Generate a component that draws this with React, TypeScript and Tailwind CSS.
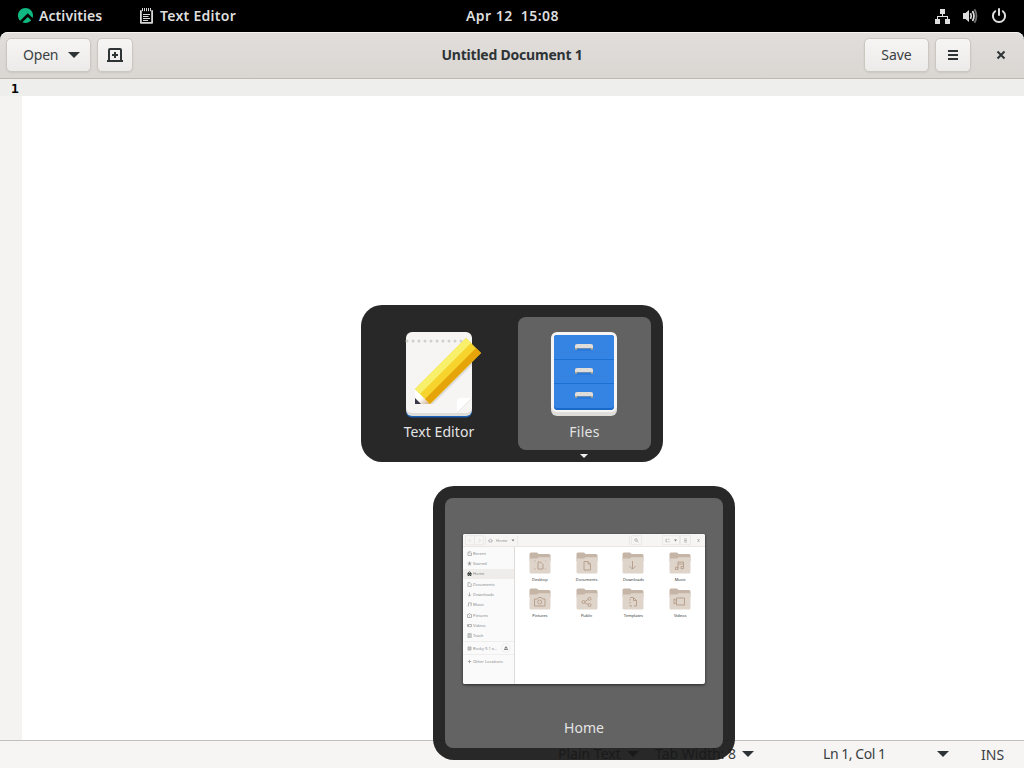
import React from 'react';

type BoxProps = { className?: string; children?: React.ReactNode };

const Caret = ({ className = '' }: BoxProps) => (
  <svg className={`shrink-0 ${className}`} width="12" height="6" viewBox="0 0 12 6">
    <path d="M0 0h12L6 6z" fill="#2e3436" />
  </svg>
);

const RockyLogo = () => (
  <svg className="absolute left-[18px] top-2" width="15" height="15" viewBox="0 0 24 24" fill="#10b981">
    <path d="M23.332 15.957c.433-1.239.668-2.570.668-3.957 0-6.627-5.373-12-12-12S0 5.373 0 12c0 3.280 1.315 6.251 3.447 8.417L15.620 8.245z" />
    <path d="M21.140 19.776l-5.520-5.520L6.975 22.900c1.528.706 3.230 1.100 5.025 1.100 3.661 0 6.940-1.640 9.140-4.224z" />
  </svg>
);

const NoteIcon = () => (
  <svg className="absolute left-[139px] top-2" width="15" height="16" viewBox="0 0 15 16">
    <path d="M1.900 2.300v12.500h11.200V2.300" fill="none" stroke="#d8d8d8" strokeWidth="1.800" strokeLinejoin="round" />
    <path d="M3.500 0v3.200M5.500 0v3.200M7.500 0v3.200M9.500 0v3.200M11.500 0v3.200" stroke="#d8d8d8" strokeWidth="1" />
    <path d="M4 6.500h7M4 8.500h5.500M4 10.500h7M4 12.500h5" stroke="#d8d8d8" strokeWidth="1" />
  </svg>
);

const TrayIcons = () => (
  <div className="absolute right-[17px] top-2 flex items-center gap-3 text-[#dedede]">
    <svg width="16" height="16" viewBox="0 0 16 16" fill="currentColor">
      <path d="M5 1h5v5H8v2h5v3h2v5h-5v-5h2V9H3v2h2v5H0v-5h2V8h5V6H5z" />
    </svg>
    <svg width="16" height="16" viewBox="0 0 16 16">
      <path d="M0 5h2.500L6 2v12l-3.500-3H0z" fill="currentColor" />
      <path d="M7.500 5.200q1.500 2.800 0 5.600" fill="none" stroke="currentColor" strokeWidth="1.700" />
      <path d="M9.500 3q3 5 0 10" fill="none" stroke="currentColor" strokeWidth="1.700" />
      <path d="M11.500 1.300q4 6.700 0 13.400" fill="none" stroke="#707070" strokeWidth="1.700" />
    </svg>
    <svg width="16" height="16" viewBox="0 0 16 16" fill="none" stroke="currentColor" strokeLinecap="round">
      <path d="M4.200 3.200a6.100 6.100 0 1 0 7.600 0" strokeWidth="2" />
      <path d="M8 1v6" strokeWidth="2" />
    </svg>
  </div>
);

const HeaderButton = ({ className = '', children }: BoxProps) => (
  <button
    className={`flex h-[34px] shrink-0 items-center rounded-[5px] border border-[#cdc7c2] bg-linear-to-b from-[#f6f5f4] to-[#edebe9] text-[#3a4042] shadow-[0_1px_2px_rgba(0,0,0,0.08)] ${className}`}
  >
    {children}
  </button>
);

const TextEditorIcon = () => (
  <svg width="96" height="96" viewBox="0 0 96 96" className="-ml-0.5 shrink-0">
    <defs>
      <linearGradient id="wood" gradientUnits="userSpaceOnUse" x1="25" y1="66" x2="38" y2="78">
        <stop offset="0.45" stopColor="#fff" />
        <stop offset="1" stopColor="#cdab8f" />
      </linearGradient>
    </defs>
    <rect x="15" y="10" width="66" height="81.500" rx="6" fill="#1a5fb4" />
    <rect x="15" y="8" width="66" height="82" rx="6" fill="#deddda" />
    <rect x="15" y="6" width="66" height="81" rx="6" fill="#f6f5f4" />
    <path d="M16 15h64" stroke="#d1cfcc" strokeWidth="3" strokeLinecap="round" strokeDasharray="0 6" />
    <path d="M66 87V76q0-4 4-4h11z" fill="#fff" />
    <path d="M66 87L81 72" stroke="#deddda" strokeWidth="0.700" />
    <path d="M38 78h4L81 39v-5z" fill="#000" opacity="0.100" />
    <path d="M24 63v15h15z" fill="url(#wood)" />
    <path d="M24 63L75 12l15 15L39 78z" fill="#f6d32d" />
    <path d="M24 63L75 12l5 5L29 68z" fill="#f8f06a" />
    <path d="M34 73L85 22l5 5L39 78z" fill="#e5a50a" />
    <path d="M24 72v6h6z" fill="#3d3846" />
  </svg>
);

const FilesIcon = () => (
  <svg width="96" height="96" viewBox="0 0 96 96" className="-ml-0.5 shrink-0">
    <rect x="15" y="10" width="66" height="80" rx="6" fill="#deddda" />
    <rect x="15" y="6" width="66" height="80" rx="6" fill="#f6f5f4" />
    <rect x="18" y="9" width="60" height="75" rx="3" fill="#1a68c8" />
    <rect x="18" y="9" width="60" height="73" rx="3" fill="#3584e4" />
    <path d="M18 33.500h60M18 57.500h60" stroke="#1c6fd3" strokeWidth="1.200" />
    {[18, 42, 66].map((y) => (
      <g key={y}>
        <path d={`M39 ${y + 4}h18v3H39z`} fill="#2a75d0" opacity="0.700" />
        <path d={`M39 ${y + 6}v-3q0-3 3-3h12q3 0 3 3v3h-2v-1.500H41V${y + 6}z`} fill="#a7a49e" />
        <path d={`M39 ${y + 4}V${y + 2}q0-2 2-2h14q2 0 2 2v2z`} fill="#deddda" />
      </g>
    ))}
  </svg>
);

const emblems: Record<string, string> = {
  Desktop: 'M9 10h2.500L14 12.500V17H9zM5.500 9h1M5.500 17h1M16 9h.7M16 17h.7',
  Documents: 'M8 9.500h4l2.500 2.500v6H8zM12 9.500V12h2.500',
  Downloads: 'M10.500 9v8M7.500 14.200l3 3 3-3',
  Music: 'M9 16.500V10h5.500v5.500M9 12h5.500M6.500 15.200H9v2.300H6.500zM12 14.500h2.500v2.300H12z',
  Pictures: 'M5.500 11h3l1-1.500h3l1 1.500h2.500v7H5.500zM8.700 14a2 2 0 1 0 4 0 2 2 0 1 0-4 0',
  Public: 'M6 14a1.500 1.500 0 1 0 3 0 1.500 1.500 0 1 0-3 0M12 10.800a1.500 1.500 0 1 0 3 0 1.500 1.500 0 1 0-3 0M12 17a1.500 1.500 0 1 0 3 0 1.500 1.500 0 1 0-3 0M9 13.500l3-2M9 14.700l3 1.700',
  Templates: 'M11.500 9.500l3 3V18H12M8 9.500h3M8 11v1.500M8 14v1.500M8 17v1h2M11.500 9.500v3h3',
  Videos: 'M7.500 10h8v7h-8zM7.500 12.500L5 11v5l2.500-1.500',
};

const Folder = ({ name }: { name: string }) => (
  <div className="flex h-9 flex-col items-center">
    <svg width="22" height="22" viewBox="0 0 22 22" className="shrink-0">
      <path d="M.5 2q0-1.500 1.500-1.500h5.500q1 0 1.500 1l.5.500h10.500q1.500 0 1.500 1.500V9H.5z" fill="#c5b5a7" />
      <path d="M.5 7.500q0-1 1-1h6.500L9.500 5.300h11q1 0 1 1V20q0 1.500-1.500 1.500H2Q.5 21.500.5 20z" fill="#dfd4ca" />
      <path d={emblems[name]} fill="none" stroke="#b39c88" strokeWidth="0.900" />
    </svg>
    <span className="mt-[2.500px] text-[4px] leading-[6px] text-[#2e3436]">{name}</span>
  </div>
);

const placePaths: Record<string, string> = {
  Recent: 'M1 1h3M1 1v3.500h3.500V2M2.500 2.500h1M4 .7l.7.700',
  Starred: 'M.5 2h4M1.200 3h2.800M1.300 4.500L2.500 3l1.200 1.500M2.500.5v3',
  Home: 'M.5 2.500L2.500.800l2 1.700M1 2.500v2h1v-1h1v1h1v-2z',
  Documents: 'M1 .7h2l1.200 1.200v2.800H1z',
  Downloads: 'M2.500.5v3.500M1 2.700l1.500 1.500L4 2.700',
  Music: 'M1.500 4V.9h2.800V3.500M.7 4h.8M3.500 3.700h.8',
  Pictures: 'M.5 1.500h1l.5-.8h1l.5.800h1v3h-4zM2 3h1',
  Videos: 'M1.500 1.500h3v2.200h-3zM1.500 2.500L.4 1.500v2z',
  Trash: 'M1 .7h3.200v4H1zM1.500 1.800h2M2 2.500v1.500M3 2.500v1.500',
  'Rocky 9.1 x…': 'M1 1h3v3H1zM1.500 2h2M1.500 3h2',
  'Other Locations': 'M2.500.8v3.500M.8 2.500h3.500',
};

const Place = ({ name, className = 'h-[10.35px]' }: { name: string; className?: string }) => (
  <div className={`flex items-center pl-1 text-[4px] leading-[5px] text-[#85898a] ${name === 'Home' ? 'bg-[#eeedec]' : ''} ${className}`}>
    <svg width="5" height="5" viewBox="0 0 5 5" className="mr-px shrink-0">
      <path d={placePaths[name]} fill="none" stroke={name === 'Home' ? '#303536' : '#858889'} strokeWidth={name === 'Home' ? '0.900' : '0.600'} />
    </svg>
    <span className="whitespace-nowrap">{name}</span>
    {name.startsWith('Rocky') && (
      <span className="ml-auto mr-1 flex h-2 w-2 items-center justify-center rounded-full shadow-[0_0_0_0.5px_#e5e3e1]">
        <svg width="4" height="4" viewBox="0 0 4 4"><path d="M0 2.500L2 0l2 2.500zM0 3h4v1H0z" fill="#858889" /></svg>
      </span>
    )}
  </div>
);

const FilesPreview = () => (
  <div className="flex h-[150px] w-[242px] flex-col overflow-hidden rounded-[2px] bg-white shadow-[0_1px_3px_rgba(0,0,0,0.6)]">
    <div className="flex h-[13px] shrink-0 items-center border-b border-[#e9e7e5] bg-[#f6f5f4]">
      <svg width="242" height="12" viewBox="0 0 242 12" fill="none" stroke="#96999a" strokeWidth=".6">
        <path d="M2.500 1.700h18v9h-18zM11.500 2v9M22.500 2v9M54.500 2v9M166.500 2v9M168.500 1.700h10v9h-10zM199.500 1.700h17v9h-17zM217.500 1.700h10v9h-10z" stroke="#e4e1de" />
        <path d="M7.500 5L6 6.500 7.500 8M16 5l1.500 1.500L16 8" opacity=".5" />
        <path d="M25.500 6.500l2-1.500 2 1.500M26 6v2h3V6" />
        <path d="M48.500 5.500h3l-1.500 2zM211 5.500h3l-1.500 2z" fill="#7b7e7f" stroke="none" />
        <circle cx="173" cy="6" r="1.300" />
        <path d="M174 7l1.500 1.500M203 5.300h1.300M205.300 5.300h1.300M203 7.800h1.300M205.300 7.800h1.300M203 5v3M221 5h3M221 6.500h3M221 8h3M234.500 5l2 3M236.500 5l-2 3" />
        <text x="33" y="8" fill="#92908e" stroke="none" fontSize="4">Home</text>
      </svg>
    </div>
    <div className="flex min-h-0 flex-1">
      <aside className="flex w-[52px] shrink-0 flex-col border-r border-[#dedbd8] bg-[#fafafa] pt-px">
        {['Recent', 'Starred', 'Home', 'Documents', 'Downloads', 'Music', 'Pictures', 'Videos', 'Trash'].map((name) => (
          <Place key={name} name={name} />
        ))}
        <Place name="Rocky 9.1 x…" className="h-[13px] border-t border-[#eeeeec]" />
        <Place name="Other Locations" className="h-[13px] border-t border-[#eeeeec]" />
      </aside>
      <main className="grid flex-1 grid-cols-4 content-start pl-[1.5px] pr-[1.5px] pt-[5px]">
        {Object.keys(emblems).map((name) => <Folder key={name} name={name} />)}
      </main>
    </div>
  </div>
);

export default function App() {
  return (
    <div className="relative flex h-screen w-screen flex-col overflow-hidden bg-black font-['Noto_Sans','Open_Sans',sans-serif] text-[14px] text-[#2e3436]">
      <header className="relative flex h-8 shrink-0 items-center pb-0.5 font-semibold text-[#dedede]">
        <RockyLogo />
        <span className="pl-[39px] tracking-[0.08px]">Activities</span>
        <NoteIcon />
        <span className="absolute left-[160px] tracking-[0.28px]">Text Editor</span>
        <span className="absolute left-[466px] whitespace-pre tracking-[0.45px]">Apr 12  15:08</span>
        <TrayIcons />
      </header>

      <div className="grid h-[47px] shrink-0 grid-cols-[1fr_auto_1fr] items-center rounded-t-[8px] border-b border-[#bfb8b1] bg-linear-to-b from-[#e1dedb] to-[#dad6d2] shadow-[inset_0_1px_0_#f5f4f3]">
        <div className="flex gap-1.5 pl-1.5">
          <HeaderButton className="w-[85px] pl-4">
            <span className="w-[45px] pb-0.5 text-left tracking-[-0.2px]">Open</span>
            <Caret />
          </HeaderButton>
          <HeaderButton className="w-9 justify-center">
            <svg width="16" height="16" viewBox="0 0 16 16" fill="none" stroke="#2e3436" strokeWidth="2">
              <path d="M0 14h16M2 14V3q0-1 1-1h10q1 0 1 1v11M8 5v6M5 8h6" />
            </svg>
          </HeaderButton>
        </div>
        <h1 className="pb-0.5 text-[14px] font-bold tracking-[-0.22px]">Untitled Document 1</h1>
        <div className="flex items-center justify-end gap-1.5 pr-[15px]">
          <HeaderButton className="w-[65px] justify-center pb-0.5">Save</HeaderButton>
          <HeaderButton className="w-9 justify-center">
            <svg width="10" height="10" viewBox="0 0 10 10"><path d="M0 1h10M0 5h10M0 9h10" stroke="#2e3436" strokeWidth="2" /></svg>
          </HeaderButton>
          <svg className="ml-4" width="16" height="16" viewBox="0 0 16 16"><path d="M4.500 4.500l7 7M11.500 4.500l-7 7" stroke="#2e3436" strokeWidth="2" /></svg>
        </div>
      </div>

      <div className="flex min-h-0 flex-1 flex-col bg-white">
        <div className="flex h-[17px] shrink-0 items-center bg-[#eeeeec] pl-[11px] pt-0.5 font-['DejaVu_Sans_Mono',monospace] text-[13px] font-bold text-black">1</div>
        <div className="w-[22px] flex-1 bg-[#f4f3f2]" />
      </div>

      <footer className="flex h-7 shrink-0 items-center border-t border-[#c4bfb9] bg-[#f6f5f4] pb-0.5 pl-[558px] text-[#3a4042]">
        <span className="w-[69px] shrink-0">Plain Text</span><Caret />
        <span className="ml-4 w-[87px] shrink-0">Tab Width: 8</span><Caret />
        <span className="ml-[69px] w-[114px] shrink-0 tracking-[-0.45px]">Ln 1, Col 1</span><Caret />
        <span className="ml-8 pt-0.5">INS</span>
      </footer>

      <section className="absolute left-[361px] top-[305px] flex h-[157px] w-[302px] gap-3 rounded-[21px] bg-[#181818]/93 p-3 text-[#e4e4e4]">
        <div className="flex h-[133px] w-[133px] flex-col items-center pt-[9px]">
          <TextEditorIcon />
          <span className="-ml-px leading-5 tracking-[0.08px]">Text Editor</span>
        </div>
        <div className="flex h-[133px] w-[133px] flex-col items-center rounded-lg bg-white/27 pt-[9px]">
          <FilesIcon />
          <span className="leading-5 tracking-[0.3px]">Files</span>
        </div>
        <svg className="absolute left-[219px] top-[149px]" width="8" height="4" viewBox="0 0 8 4"><path d="M0 0h8L4 4z" fill="#eee" /></svg>
      </section>

      <section className="absolute left-[433px] top-[486px] h-[274px] w-[302px] rounded-[21px] bg-[#181818]/93 p-3 text-[#e4e4e4]">
        <div className="flex h-[250px] flex-col items-center rounded-lg bg-[#636363] pt-9">
          <FilesPreview />
          <span className="mt-[34px] leading-5">Home</span>
        </div>
      </section>
    </div>
  );
}
